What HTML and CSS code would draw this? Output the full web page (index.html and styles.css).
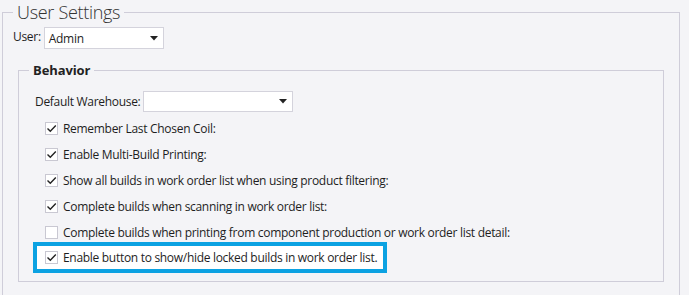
FILE: index.html
```html
<!DOCTYPE html>
<html lang="en">
<head>
    <meta charset="UTF-8">
    <title>User Settings</title>
    <link rel="stylesheet" href="styles.css">
</head>
<body>
    <fieldset class="group">
        <legend class="group-title">User Settings</legend>

        <div class="field">
            <span class="label">User:</span>
            <div class="select user-select">
                <span>Admin</span>
                <svg class="arrow" width="8" height="5" viewBox="0 0 8 5"><path d="M0 0h8L4 4.5z" fill="#222"/></svg>
            </div>
        </div>

        <fieldset class="sub">
            <legend class="sub-title">Behavior</legend>

            <div class="field">
                <span class="label">Default Warehouse:</span>
                <div class="select wh-select">
                    <span></span>
                    <svg class="arrow" width="8" height="5" viewBox="0 0 8 5"><path d="M0 0h8L4 4.5z" fill="#222"/></svg>
                </div>
            </div>

            <div class="checks">
                <div class="check-row">
                    <span class="box on"><svg width="11" height="11" viewBox="0 0 11 11"><path d="M1.5 5.5l2.8 2.8L9.8 2.6" fill="none" stroke="#222" stroke-width="1.4"/></svg></span>
                    <span>Remember Last Chosen Coil:</span>
                </div>
                <div class="check-row">
                    <span class="box on"><svg width="11" height="11" viewBox="0 0 11 11"><path d="M1.5 5.5l2.8 2.8L9.8 2.6" fill="none" stroke="#222" stroke-width="1.4"/></svg></span>
                    <span>Enable Multi-Build Printing:</span>
                </div>
                <div class="check-row">
                    <span class="box on"><svg width="11" height="11" viewBox="0 0 11 11"><path d="M1.5 5.5l2.8 2.8L9.8 2.6" fill="none" stroke="#222" stroke-width="1.4"/></svg></span>
                    <span>Show all builds in work order list when using product filtering:</span>
                </div>
                <div class="check-row">
                    <span class="box on"><svg width="11" height="11" viewBox="0 0 11 11"><path d="M1.5 5.5l2.8 2.8L9.8 2.6" fill="none" stroke="#222" stroke-width="1.4"/></svg></span>
                    <span>Complete builds when scanning in work order list:</span>
                </div>
                <div class="check-row">
                    <span class="box"></span>
                    <span>Complete builds when printing from component production or work order list detail:</span>
                </div>
                <div class="check-row">
                    <div class="highlight">
                        <span class="box on"><svg width="11" height="11" viewBox="0 0 11 11"><path d="M1.5 5.5l2.8 2.8L9.8 2.6" fill="none" stroke="#222" stroke-width="1.4"/></svg></span>
                        <span>Enable button to show/hide locked builds in work order list.</span>
                    </div>
                </div>
            </div>
        </fieldset>
    </fieldset>
</body>
</html>
```

FILE: styles.css
```css
body {
    margin: 0;
    background: #f4f4f7;
    font-family: "Open Sans", "Noto Sans", sans-serif;
    font-size: 12px;
    letter-spacing: -0.3px;
    color: #1e1e1e;
    overflow: hidden;
}
.group {
    margin: 0 9px 0 2px;
    padding: 0 10px 20px 10px;
    border: 1px solid #cfcdd9;
    min-width: 0;
}
.group-title {
    padding: 0 4px;
    font-size: 18px;
    line-height: 24px;
    font-weight: 300;
    color: #333;
}
.field {
    display: flex;
    align-items: center;
}
.label {
    margin-right: 3px;
}
.select {
    display: flex;
    align-items: center;
    justify-content: space-between;
    box-sizing: border-box;
    background: #fff;
    border: 1px solid #d4d3dc;
    padding: 0 5px 0 4px;
}
.user-select {
    margin-top: 3px;
    width: 120px;
    height: 22px;
}
.wh-select {
    width: 150px;
    height: 21px;
}
.sub {
    margin: 12px 5px 0 5px;
    padding: 12px 16px 10px 16px;
    border: 1px solid #cfcdd9;
    min-width: 0;
}
.sub-title {
    margin-left: -6px;
    padding: 0 4px;
    font-size: 13px;
    line-height: 18px;
    font-weight: 700;
    letter-spacing: -0.1px;
    color: #222;
}
.checks {
    margin-top: 3px;
    padding-left: 10px;
    display: flex;
    flex-direction: column;
}
.check-row {
    height: 26px;
    display: flex;
    align-items: center;
    gap: 5px;
}
.box {
    box-sizing: border-box;
    width: 13px;
    height: 13px;
    background: #fff;
    border: 1px solid #c9c8d2;
    display: flex;
    align-items: center;
    justify-content: center;
}
.highlight {
    display: flex;
    align-items: center;
    gap: 5px;
    height: 23px;
    margin: -3px 0 -2px -12px;
    padding: 0 6px 0 8px;
    border: 4px solid #0ca2e2;
    background: #fff;
}
```
